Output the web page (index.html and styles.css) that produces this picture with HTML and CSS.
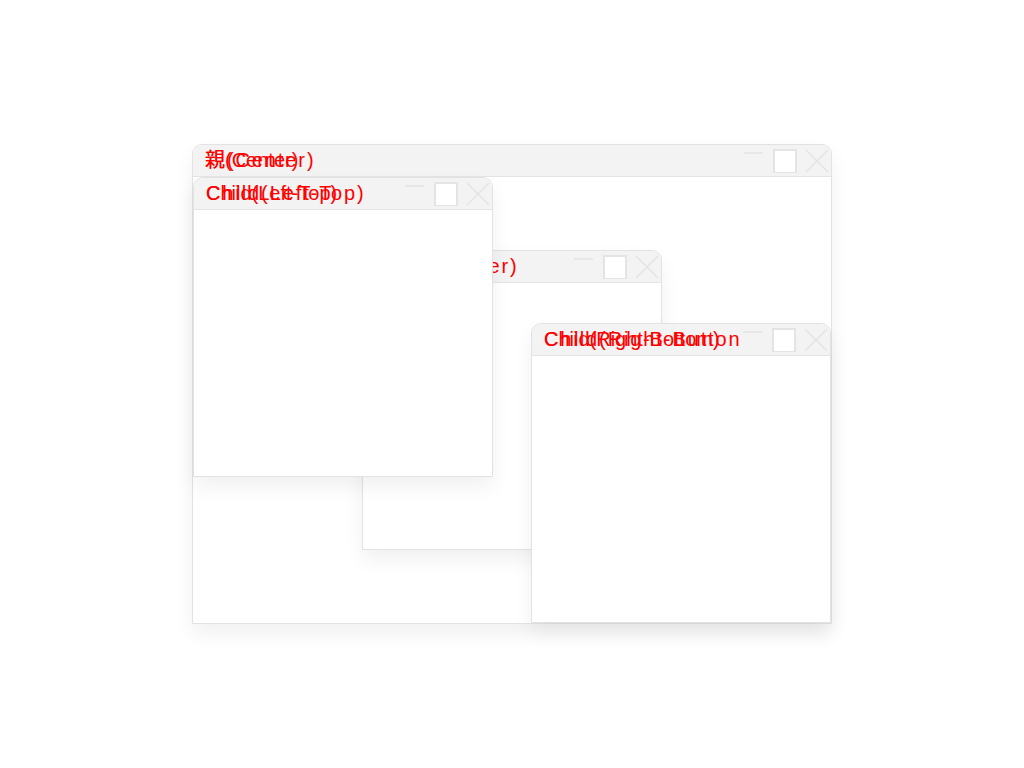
FILE: index.html
```html
<!DOCTYPE html>
<html lang="ja">
<head>
    <meta charset="UTF-8">
    <meta name="viewport" content="width=device-width, initial-scale=1.0">
    <title>Windows</title>
    <link rel="stylesheet" href="styles.css">
</head>
<body>
    <div class="window parent">
        <div class="titlebar">
            <div class="title">親(Center)<span class="ghost">親(Center)</span></div>
            <div class="controls">
                <svg class="btn" viewBox="0 0 24 24"><line x1="3" y1="4" x2="22" y2="4"/></svg>
                <svg class="btn" viewBox="0 0 24 24"><rect x="1" y="1" width="22" height="23" class="box"/></svg>
                <svg class="btn" viewBox="0 0 24 24"><line x1="1" y1="1" x2="23" y2="23"/><line x1="23" y1="1" x2="1" y2="23"/></svg>
            </div>
        </div>
        <div class="content"></div>

        <!-- 子ウィンドウ -->
        <div class="window child center">
            <div class="titlebar">
                <div class="title">Child(Center)<span class="ghost">Child(Center)</span></div>
                <div class="controls">
                    <svg class="btn" viewBox="0 0 24 24"><line x1="3" y1="4" x2="22" y2="4"/></svg>
                    <svg class="btn" viewBox="0 0 24 24"><rect x="1" y="1" width="22" height="23" class="box"/></svg>
                    <svg class="btn" viewBox="0 0 24 24"><line x1="1" y1="1" x2="23" y2="23"/><line x1="23" y1="1" x2="1" y2="23"/></svg>
                </div>
            </div>
            <div class="content"></div>
        </div>

        <div class="window child left-top">
            <div class="titlebar">
                <div class="title">Child(Left-Top)<span class="ghost">Child(Left-Top)</span></div>
                <div class="controls">
                    <svg class="btn" viewBox="0 0 24 24"><line x1="3" y1="4" x2="22" y2="4"/></svg>
                    <svg class="btn" viewBox="0 0 24 24"><rect x="1" y="1" width="22" height="23" class="box"/></svg>
                    <svg class="btn" viewBox="0 0 24 24"><line x1="1" y1="1" x2="23" y2="23"/><line x1="23" y1="1" x2="1" y2="23"/></svg>
                </div>
            </div>
            <div class="content"></div>
        </div>

        <div class="window child right-bottom">
            <div class="titlebar">
                <div class="title">Child(Right-Bottom)<span class="ghost">Child(Right-Button</span></div>
                <div class="controls">
                    <svg class="btn" viewBox="0 0 24 24"><line x1="3" y1="4" x2="22" y2="4"/></svg>
                    <svg class="btn" viewBox="0 0 24 24"><rect x="1" y="1" width="22" height="23" class="box"/></svg>
                    <svg class="btn" viewBox="0 0 24 24"><line x1="1" y1="1" x2="23" y2="23"/><line x1="23" y1="1" x2="1" y2="23"/></svg>
                </div>
            </div>
            <div class="content"></div>
        </div>
    </div>
</body>
</html>
```

FILE: styles.css
```css
body {
    margin: 0;
    height: 768px;
    display: flex;
    align-items: center;
    justify-content: center;
    background: #ffffff;
    font-family: "Liberation Sans", "Noto Sans CJK JP", sans-serif;
}
.window {
    box-sizing: border-box;
    display: flex;
    flex-direction: column;
    background: #ffffff;
    border: 1px solid #e2e2e2;
    border-radius: 10px 10px 0 0;
    box-shadow: 0 10px 20px rgba(0, 0, 0, 0.06);
}
.parent {
    position: relative;
    width: 640px;
    height: 480px;
}
.child {
    position: absolute;
    width: 300px;
    height: 300px;
}
.child.center {
    left: 169px;
    top: 105px;
}
.child.left-top {
    left: 0;
    top: 32px;
}
.child.right-bottom {
    right: 0;
    bottom: 0;
}
.titlebar {
    box-sizing: border-box;
    height: 32px;
    flex: none;
    display: flex;
    align-items: center;
    justify-content: space-between;
    padding: 0 2px 0 12px;
    background: #f3f3f3;
    border-bottom: 1px solid #e4e4e4;
    border-radius: 9px 9px 0 0;
}
.title {
    position: relative;
    font-size: 20px;
    line-height: 31px;
    color: #ff0000;
    white-space: nowrap;
}
.ghost {
    position: absolute;
    left: 0;
    top: 0;
    letter-spacing: 1.9px;
}
.controls {
    display: flex;
    gap: 8px;
}
.btn {
    width: 24px;
    height: 24px;
    stroke: #e4e4e4;
    stroke-width: 1.6;
    fill: none;
}
.btn .box {
    fill: #ffffff;
    stroke-width: 2;
}
.content {
    flex: 1;
    background: #ffffff;
}
```
